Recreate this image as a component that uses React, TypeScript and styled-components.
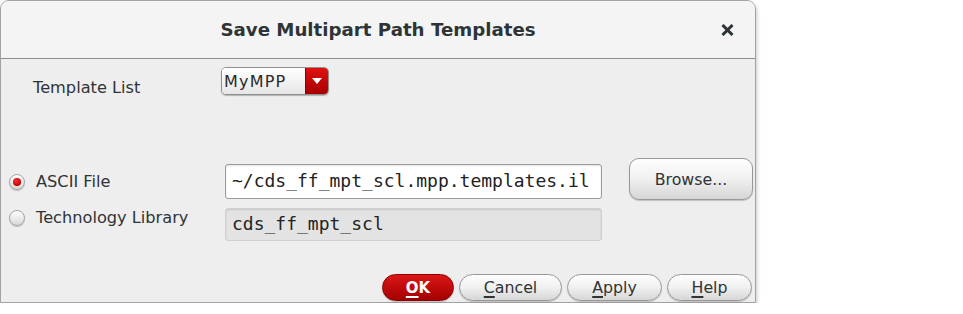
import React from "react";
import styled, { createGlobalStyle } from "styled-components";

const GlobalStyle = createGlobalStyle`
  html, body { margin: 0; padding: 0; background: #ffffff; }
  body { font-family: "DejaVu Sans", "Noto Sans", sans-serif; color: #2e3436; }
`;

const Dialog = styled.div`
  width: 754px;
  border: 1px solid #a2a2a2;
  border-radius: 9px 9px 0 0;
  background: #eeeeee;
  box-shadow: 0 3px 5px rgba(0, 0, 0, 0.3);
  display: flex;
  flex-direction: column;
`;

const TitleBar = styled.div`
  height: 57px;
  border-bottom: 1px solid #8e8e8e;
  border-radius: 8px 8px 0 0;
  background: #f4f4f4;
  display: grid;
  grid-template-columns: 1fr auto 1fr;
  align-items: center;
`;

const Title = styled.div`
  grid-column: 2;
  font-size: 18.2px;
  font-weight: bold;
  color: #2e3436;
`;

const CloseButton = styled.div`
  grid-column: 3;
  justify-self: end;
  margin-right: 21px;
  width: 13px;
  height: 12px;
  display: flex;
`;

const Body = styled.div`
  padding: 8px 0 1px;
  display: flex;
  flex-direction: column;
`;

const TemplateRow = styled.div`
  height: 28px;
  display: flex;
  align-items: flex-start;
`;

const Label = styled.div`
  font-size: 16.2px;
  line-height: 18px;
  color: #2e3436;
  white-space: nowrap;
`;

const TemplateLabel = styled(Label)`
  width: 188px;
  padding-left: 32px;
  padding-top: 12px;
`;

const Dropdown = styled.div`
  width: 108px;
  height: 28px;
  display: flex;
  border-radius: 5px;
  box-shadow: 0 1px 1px rgba(0, 0, 0, 0.25);
  overflow: hidden;
  border: 1px solid #8f8f8f;
  box-sizing: border-box;
`;

const DropText = styled.div`
  flex: 1;
  display: flex;
  align-items: center;
  padding-left: 2px;
  font-size: 16px;
  letter-spacing: 1.2px;
  color: #2a2a2a;
  background: linear-gradient(#ffffff, #e6e6e6);
`;

const DropArrow = styled.div`
  width: 22px;
  display: flex;
  align-items: center;
  justify-content: center;
  background: linear-gradient(#e01010, #a80000);
  border-left: 1px solid #900000;
`;

const FileGrid = styled.div`
  margin-top: 63px;
  display: grid;
  grid-template-columns: 197px 377px 124px;
  grid-template-rows: 42px 33px;
  column-gap: 27px;
  row-gap: 8px;
`;

const RadioGroup = styled.div`
  grid-column: 1;
  grid-row: 1 / span 2;
  display: flex;
  flex-direction: column;
  padding-top: 15px;
  gap: 18px;
`;

const RadioOption = styled.div`
  height: 18px;
  display: flex;
  align-items: center;
  gap: 11px;
  padding-left: 8px;
`;

const RadioCircle = styled.div<{ $checked?: boolean }>`
  width: 16px;
  height: 16px;
  box-sizing: border-box;
  border-radius: 50%;
  border: 1px solid #a5a5a5;
  background: linear-gradient(#ffffff, #d8d8d8);
  box-shadow: 0 1px 1px rgba(0, 0, 0, 0.2);
  display: flex;
  align-items: center;
  justify-content: center;
  &::after {
    content: "";
    display: ${(p) => (p.$checked ? "block" : "none")};
    width: 8px;
    height: 8px;
    border-radius: 50%;
    background: radial-gradient(circle at 40% 35%, #ff3030, #c00000 70%);
  }
`;

const TextField = styled.div<{ $disabled?: boolean }>`
  box-sizing: border-box;
  height: ${(p) => (p.$disabled ? "33px" : "35px")};
  align-self: ${(p) => (p.$disabled ? "stretch" : "end")};
  margin-bottom: ${(p) => (p.$disabled ? "0" : "1px")};
  border: 1px solid ${(p) => (p.$disabled ? "#d0d0d0" : "#9a9a9a")};
  border-radius: 3px;
  background: ${(p) => (p.$disabled ? "#e3e3e3" : "#ffffff")};
  box-shadow: inset 0 1px 2px rgba(0, 0, 0, 0.12);
  display: flex;
  align-items: center;
  padding-left: 6px;
  padding-bottom: 2px;
  font-family: "DejaVu Sans Mono", "Liberation Mono", monospace;
  font-size: 18px;
  color: #222222;
  white-space: nowrap;
  overflow: hidden;
`;

const PushButton = styled.div<{ $primary?: boolean; $w: number; $h?: number; $r?: number }>`
  box-sizing: border-box;
  width: ${(p) => p.$w}px;
  height: ${(p) => p.$h ?? 27}px;
  border-radius: ${(p) => p.$r ?? 14}px;
  border: 1px solid ${(p) => (p.$primary ? "#8a0000" : "#989898")};
  background: ${(p) =>
    p.$primary
      ? "linear-gradient(#dc1616, #a30000)"
      : "linear-gradient(#fefefe, #f0f0f0 50%, #d6d6d6)"};
  box-shadow: 0 1px 1px rgba(0, 0, 0, 0.2);
  display: flex;
  align-items: center;
  justify-content: center;
  font-size: ${(p) => (p.$primary ? "15px" : "15.8px")};
  font-weight: ${(p) => (p.$primary ? "bold" : "normal")};
  color: ${(p) => (p.$primary ? "#ffffff" : "#2e3436")};
  white-space: nowrap;
  u {
    text-decoration-thickness: 2px;
    text-underline-offset: 3px;
  }
`;

const BrowseCell = styled.div`
  grid-column: 3;
  grid-row: 1;
  display: flex;
`;

const ButtonRow = styled.div`
  margin-top: 33px;
  display: flex;
  justify-content: flex-end;
  gap: 5px;
  padding-right: 3px;
`;

export default function App() {
  return (
    <>
      <GlobalStyle />
      <Dialog>
        <TitleBar>
          <Title>Save Multipart Path Templates</Title>
          <CloseButton>
            <svg width="13" height="12" viewBox="0 0 13 12">
              <path d="M1.5 1 L11.5 11 M11.5 1 L1.5 11" stroke="#2e3436" strokeWidth="3" strokeLinecap="butt" />
            </svg>
          </CloseButton>
        </TitleBar>
        <Body>
          <TemplateRow>
            <TemplateLabel>Template List</TemplateLabel>
            <Dropdown>
              <DropText>MyMPP</DropText>
              <DropArrow>
                <svg width="10" height="6" viewBox="0 0 10 6">
                  <path d="M0 0 L10 0 L5 6 Z" fill="#ffffff" />
                </svg>
              </DropArrow>
            </Dropdown>
          </TemplateRow>
          <FileGrid>
            <RadioGroup>
              <RadioOption>
                <RadioCircle $checked />
                <Label>ASCII File</Label>
              </RadioOption>
              <RadioOption>
                <RadioCircle />
                <Label>Technology Library</Label>
              </RadioOption>
            </RadioGroup>
            <TextField style={{ gridColumn: 2, gridRow: 1 }}>~/cds_ff_mpt_scl.mpp.templates.il</TextField>
            <BrowseCell>
              <PushButton $w={124} $h={42} $r={10}>Browse...</PushButton>
            </BrowseCell>
            <TextField $disabled style={{ gridColumn: 2, gridRow: 2 }}>cds_ff_mpt_scl</TextField>
          </FileGrid>
          <ButtonRow>
            <PushButton $primary $w={72}><u>O</u>K</PushButton>
            <PushButton $w={103}><u>C</u>ancel</PushButton>
            <PushButton $w={95}><u>A</u>pply</PushButton>
            <PushButton $w={85}><u>H</u>elp</PushButton>
          </ButtonRow>
        </Body>
      </Dialog>
    </>
  );
}
